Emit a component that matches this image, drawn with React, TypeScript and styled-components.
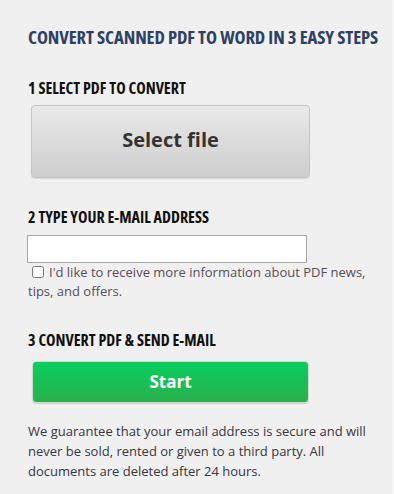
import React, { useState } from 'react'
import styled, { createGlobalStyle } from 'styled-components'

const GlobalStyle = createGlobalStyle`
	html, body {
		margin: 0;
		padding: 0;
		background: #f0f0f0;
	}
	body {
		font-family: 'Open Sans', 'DejaVu Sans', sans-serif;
	}
`

const Page = styled.div`
	box-sizing: border-box;
	width: 394px;
	min-height: 494px;
	padding: 26px 0 0 28px;
	background: #f0f0f0;
	border-right: 2px solid #f7f7f7;
`

const Title = styled.h1`
	margin: 0 0 30px;
	font-family: 'Open Sans', sans-serif;
	font-stretch: 75%;
	font-weight: 700;
	font-size: 18.6px;
	line-height: 22px;
	color: #2e4063;
	letter-spacing: -0.1px;
	white-space: nowrap;
`

const StepTitle = styled.h2`
	margin: 0 0 ${p => p.$gap}px;
	font-family: 'Open Sans', sans-serif;
	font-stretch: 75%;
	font-weight: 700;
	font-size: 16px;
	line-height: 20px;
	color: #111;
	letter-spacing: 0;
	white-space: nowrap;
`

const Step = styled.section`
	margin-bottom: ${p => p.$after}px;
`

const BigButton = styled.button`
	display: flex;
	align-items: center;
	justify-content: center;
	box-sizing: border-box;
	margin-left: ${p => (p.$green ? 4 : 3)}px;
	width: ${p => (p.$green ? 277 : 279)}px;
	height: ${p => (p.$green ? 42 : 73)}px;
	border: 1px solid ${p => (p.$green ? '#d6d6d6' : '#c4c4c4')};
	border-radius: 4px;
	background: ${p =>
		p.$green
			? 'linear-gradient(#08cf5f, #2ab04c)'
			: 'linear-gradient(#e9e9e9, #cecece)'};
	box-shadow: ${p => (p.$green ? '0 1px 1px rgba(0,0,0,0.15)' : '0 1px 1px rgba(0,0,0,0.1)')};
	font-family: 'Open Sans', sans-serif;
	font-weight: 700;
	font-size: ${p => (p.$green ? 17 : 20)}px;
	color: ${p => (p.$green ? '#fff' : '#333')};
	cursor: pointer;
	padding: 0 0 ${p => (p.$green ? 2 : 4)}px;
`

const EmailInput = styled.input`
	display: block;
	box-sizing: border-box;
	width: 280px;
	height: 28px;
	margin: 0 0 0 -1px;
	border: 1px solid #a9a9a9;
	background: #fff;
	font-family: 'Open Sans', sans-serif;
	font-size: 13px;
	outline: none;
`

const OptIn = styled.label`
	display: block;
	width: 350px;
	font-family: 'Open Sans', sans-serif;
	font-size: 13px;
	line-height: 19px;
	color: #5a4d59;
`

const Box = styled.input`
	width: 12px;
	height: 12px;
	margin: 0 5px 0 4px;
	vertical-align: -1px;
	accent-color: #888;
`

const Note = styled.p`
	margin: 0;
	width: 350px;
	font-family: 'Open Sans', sans-serif;
	font-size: 13px;
	line-height: 20px;
	color: #3a3340;
`

export default function App() {
	const [email, setEmail] = useState('')
	const [news, setNews] = useState(false)
	return (
		<>
			<GlobalStyle />
			<Page>
				<Title>CONVERT SCANNED PDF TO WORD IN 3 EASY STEPS</Title>
				<Step $after={29}>
					<StepTitle $gap={7}>1 SELECT PDF TO CONVERT</StepTitle>
					<BigButton>Select file</BigButton>
				</Step>
				<Step $after={29}>
					<StepTitle $gap={8}>2 TYPE YOUR E-MAIL ADDRESS</StepTitle>
					<EmailInput value={email} onChange={e => setEmail(e.target.value)} />
					<OptIn>
						<Box type="checkbox" checked={news} onChange={() => setNews(!news)} />
						I'd like to receive more information about PDF news, tips, and offers.
					</OptIn>
				</Step>
				<Step $after={18}>
					<StepTitle $gap={11}>3 CONVERT PDF &amp; SEND E-MAIL</StepTitle>
					<BigButton $green>Start</BigButton>
				</Step>
				<Note>
					We guarantee that your email address is secure and will never be sold,
					rented or given to a third party. All documents are deleted after 24
					hours.
				</Note>
			</Page>
		</>
	)
}
